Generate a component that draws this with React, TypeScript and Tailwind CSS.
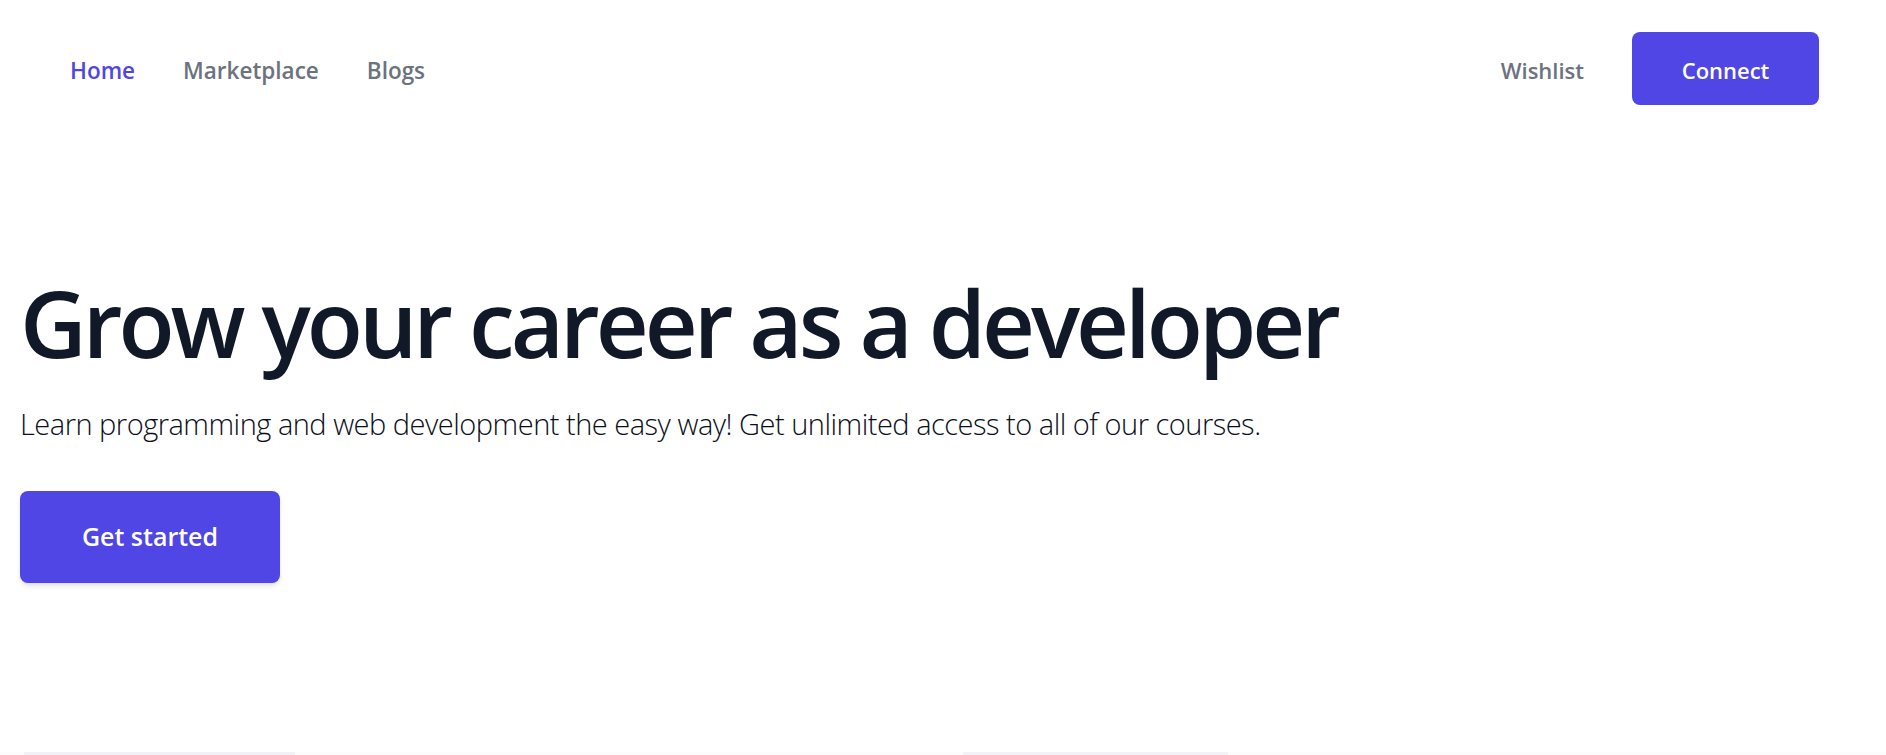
import React from 'react';

const navLinks = ['Home', 'Marketplace', 'Blogs'];

export default function App() {
  return (
    <div className="min-h-screen bg-white font-['Open_Sans',sans-serif] overflow-hidden">
      {/* top nav */}
      <nav className="flex items-center justify-between pl-[70px] pr-[67px] py-8">
        <ul className="flex items-center gap-12 pt-1">
          {navLinks.map((link, i) => (
            <li key={link}>
              <a
                href="#"
                className={
                  i === 0
                    ? 'text-[22.5px] font-semibold text-[#4f46e5]'
                    : 'text-[22.5px] font-semibold text-[#6b7280]'
                }
              >
                {link}
              </a>
            </li>
          ))}
        </ul>
        <div className="flex items-center gap-12">
          <a href="#" className="pt-1 text-[22px] font-semibold text-[#6b7280]">
            Wishlist
          </a>
          <button className="w-[187px] h-[73px] pt-1 rounded-lg bg-[#4f46e5] text-white text-[22px] font-semibold">
            Connect
          </button>
        </div>
      </nav>

      {/* hero */}
      <section className="px-5 mt-[140px]">
        <h1 className="text-[92px] leading-none font-semibold text-[#111827] tracking-[-4px]">
          Grow your career as a developer
        </h1>
        <p className="mt-[37px] text-[29px] leading-[36px] font-light text-[#0b0f19] tracking-[-0.5px]">
          Learn programming and web development the easy way! Get unlimited access to all of our courses.
        </p>
        <button className="mt-[49px] w-[260px] h-[92px] rounded-lg bg-[#4f46e5] text-white text-[25px] font-semibold shadow-md">
          Get started
        </button>
      </section>

      {/* course previews, cut off by the fold */}
      <section className="mt-[169px] flex gap-[668px] px-6 bg-[#fcfcfd]">
        <div className="w-[271px] h-[200px] bg-[#f1f1f6]" />
        <div className="w-[265px] h-[200px] bg-[#f3f3f7]" />
      </section>
    </div>
  );
}
